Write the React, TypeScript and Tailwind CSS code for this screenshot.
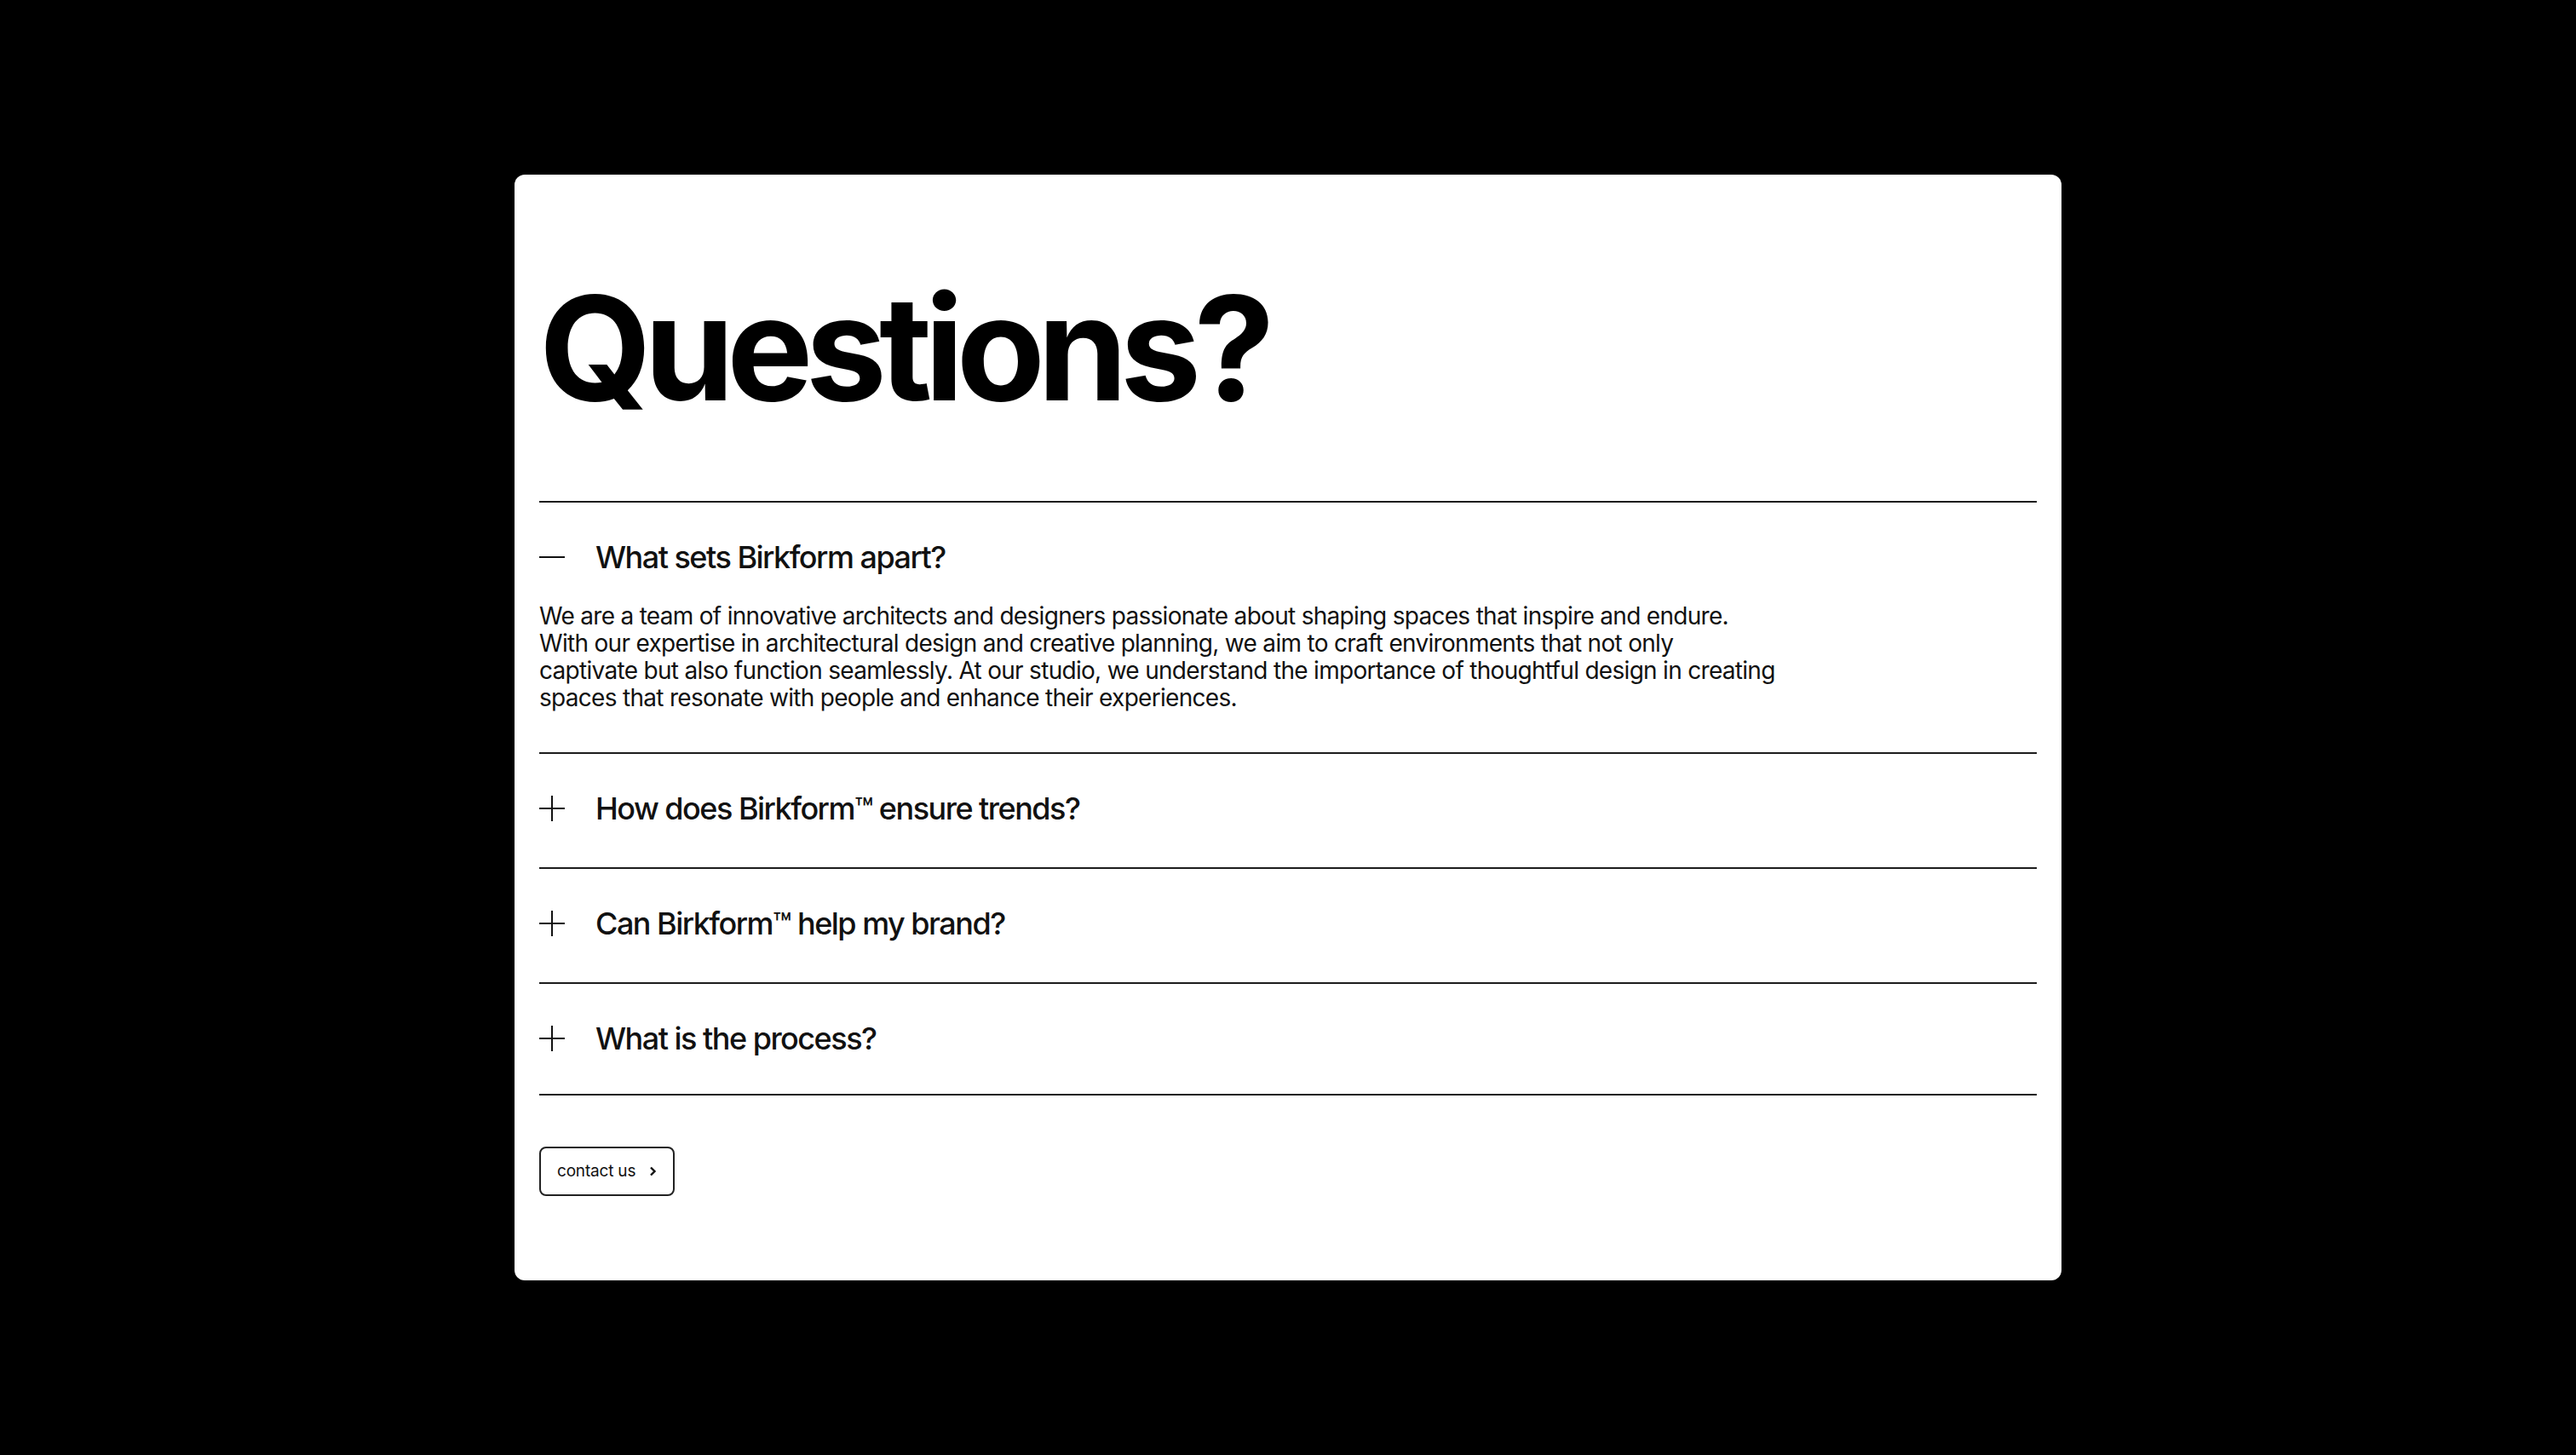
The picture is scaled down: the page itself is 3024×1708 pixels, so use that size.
import { useState } from 'react'

const faqs = [
  {
    q: 'What sets Birkform apart?',
    a: [
      'We are a team of innovative architects and designers passionate about shaping spaces that inspire and endure.',
      'With our expertise in architectural design and creative planning, we aim to craft environments that not only',
      'captivate but also function seamlessly. At our studio, we understand the importance of thoughtful design in creating',
      'spaces that resonate with people and enhance their experiences.',
    ],
  },
  { q: 'How does Birkform™ ensure trends?', a: [] },
  { q: 'Can Birkform™ help my brand?', a: [] },
  { q: 'What is the process?', a: [] },
]

function Toggle({ open }: { open: boolean }) {
  return (
    <svg width="30" height="30" viewBox="0 0 30 30" className="shrink-0">
      <line x1="0" y1="15" x2="30" y2="15" stroke="#111" strokeWidth="2" />
      {!open && <line x1="15" y1="0" x2="15" y2="30" stroke="#111" strokeWidth="2" />}
    </svg>
  )
}

export default function App() {
  const [openIdx, setOpenIdx] = useState(0)

  return (
    <div className="min-h-screen w-full bg-black flex items-center justify-center font-['Inter',sans-serif] text-[#111]">
      <div className="w-[1816px] bg-white rounded-[12px] px-[29px] pt-[118px] pb-[99px]">
        <h1 className="text-[170px] leading-none font-bold tracking-[-0.052em] text-black">Questions?</h1>

        <div className="mt-[95px] border-b-2 border-[#1c1c1c]">
          {faqs.map((f, i) => {
            const open = openIdx === i
            const last = i === faqs.length - 1
            return (
              <div key={f.q} className="border-t-2 border-[#1c1c1c]">
                <button
                  onClick={() => setOpenIdx(open ? -1 : i)}
                  className={`w-full flex items-center gap-[36px] pt-[46px] text-left ${
                    open ? 'pb-[35px]' : last ? 'pb-[47px]' : 'pb-[51px]'
                  }`}
                >
                  <Toggle open={open} />
                  <span className="text-[36px] leading-[36px] font-medium tracking-[-0.042em]">{f.q}</span>
                </button>
                {open && (
                  <div className="pb-[48px] text-[28px] leading-[32px] tracking-[-0.025em] whitespace-nowrap">
                    {f.a.map((line) => (
                      <div key={line}>{line}</div>
                    ))}
                  </div>
                )}
              </div>
            )
          })}
        </div>

        <button className="mt-[60px] h-[58px] flex items-center gap-[16px] pl-[19px] pr-[19px] border-2 border-[#222] rounded-[8px] text-[19px] tracking-[-0.01em]">
          <span>contact us</span>
          <svg width="9" height="12" viewBox="0 0 9 12">
            <path d="M2 1.5 L6.5 6 L2 10.5" fill="none" stroke="#111" strokeWidth="2.4" />
          </svg>
        </button>
      </div>
    </div>
  )
}
